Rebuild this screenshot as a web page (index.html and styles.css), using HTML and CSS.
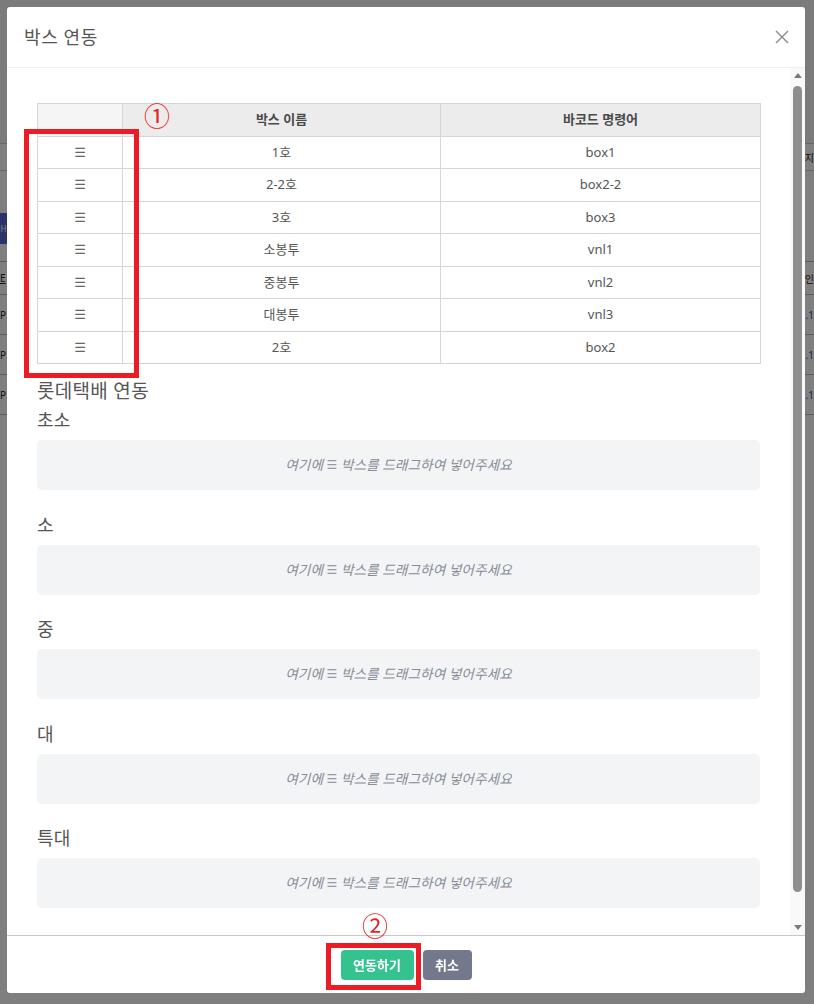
FILE: index.html
```html
<!DOCTYPE html>
<html lang="ko">
<head>
<meta charset="utf-8">
<title>박스 연동</title>
<link rel="stylesheet" href="styles.css">
</head>
<body>
<div class="page">
  <div class="page-top"></div>
  <div class="page-strip"><span class="edge-r">지</span></div>
  <div class="page-tools"><span class="page-btn">H</span></div>
  <div class="page-table">
    <div class="prow phead"><span class="edge-l">E</span><span class="edge-r">인</span></div>
    <div class="prow"><span class="edge-l">P</span><span class="edge-r blue">.1</span></div>
    <div class="prow"><span class="edge-l">P</span><span class="edge-r blue">.1</span></div>
    <div class="prow"><span class="edge-l">P</span><span class="edge-r blue">.1</span></div>
  </div>
</div>
<div class="backdrop"></div>

<div class="modal">
  <div class="modal-header">
    <div class="modal-title">박스 연동</div>
    <button class="close" aria-label="닫기">
      <svg width="14" height="14" viewBox="0 0 14 14"><path d="M1 1 L13 13 M13 1 L1 13" stroke="#888" stroke-width="1.4" fill="none"/></svg>
    </button>
  </div>
  <div class="modal-body">
    <div class="body-content">
      <table class="box-table">
        <colgroup><col class="c1"><col class="c2"><col class="c3"></colgroup>
        <thead>
          <tr><th class="th-empty"></th><th>박스 이름</th><th>바코드 명령어</th></tr>
        </thead>
        <tbody>
          <tr><td><span class="grip">☰</span></td><td>1호</td><td>box1</td></tr>
          <tr><td><span class="grip">☰</span></td><td>2-2호</td><td>box2-2</td></tr>
          <tr><td><span class="grip">☰</span></td><td>3호</td><td>box3</td></tr>
          <tr><td><span class="grip">☰</span></td><td>소봉투</td><td>vnl1</td></tr>
          <tr><td><span class="grip">☰</span></td><td>중봉투</td><td>vnl2</td></tr>
          <tr><td><span class="grip">☰</span></td><td>대봉투</td><td>vnl3</td></tr>
          <tr><td><span class="grip">☰</span></td><td>2호</td><td>box2</td></tr>
        </tbody>
      </table>
      <div class="group-title">롯데택배 연동</div>
      <div class="zones">
        <div class="zone"><div class="zone-label">초소</div><div class="drop">여기에 <span class="grip">☰</span> 박스를 드래그하여 넣어주세요</div></div>
        <div class="zone"><div class="zone-label">소</div><div class="drop">여기에 <span class="grip">☰</span> 박스를 드래그하여 넣어주세요</div></div>
        <div class="zone"><div class="zone-label">중</div><div class="drop">여기에 <span class="grip">☰</span> 박스를 드래그하여 넣어주세요</div></div>
        <div class="zone"><div class="zone-label">대</div><div class="drop">여기에 <span class="grip">☰</span> 박스를 드래그하여 넣어주세요</div></div>
        <div class="zone"><div class="zone-label">특대</div><div class="drop">여기에 <span class="grip">☰</span> 박스를 드래그하여 넣어주세요</div></div>
      </div>
    </div>
    <div class="scrollbar">
      <div class="sb-btn"><svg width="8" height="5" viewBox="0 0 8 5"><path d="M0 5 L8 5 L4 0 Z" fill="#7a7a7a"/></svg></div>
      <div class="sb-track"><div class="sb-thumb"></div></div>
      <div class="sb-btn"><svg width="8" height="5" viewBox="0 0 8 5"><path d="M0 0 L8 0 L4 5 Z" fill="#7a7a7a"/></svg></div>
    </div>
  </div>
  <div class="modal-footer">
    <button class="btn btn-green">연동하기</button>
    <button class="btn btn-gray">취소</button>
  </div>

  <div class="mark-box mark-box-1"></div>
  <div class="mark-num mark-num-1">①</div>
  <div class="mark-box mark-box-2"></div>
  <div class="mark-num mark-num-2">②</div>
</div>
</body>
</html>
```
FILE: styles.css
```css
html, body {
  margin: 0;
  padding: 0;
  height: 100%;
  overflow: hidden;
}
body {
  font-family: "Noto Sans", "Noto Sans CJK KR", sans-serif;
  background: #ffffff;
}

/* background page (dimmed by the backdrop) */
.page {
  width: 814px;
  height: 1004px;
  overflow: hidden;
  background: #ffffff;
  font-size: 11px;
  color: #222;
}
.page-top {
  height: 143px;
  background: #f7f7f7;
}
.page-strip {
  height: 26px;
  border-top: 1px solid #ccc;
  border-bottom: 1px solid #ccc;
  display: flex;
  justify-content: flex-end;
  align-items: center;
}
.edge-r {
  font-size: 10px;
}
.edge-l {
  font-size: 10px;
}
.blue { color: #3050a0; }
.page-tools {
  margin-top: 42px;
  height: 31px;
  display: flex;
}
.page-btn {
  width: 7px;
  background: #5468d4;
  color: #fff;
  font-size: 8px;
  display: flex;
  align-items: center;
  justify-content: center;
}
.page-table {
  margin-top: 17px;
}
.prow {
  height: 39px;
  border-bottom: 1px solid #bbb;
  display: flex;
  justify-content: space-between;
  align-items: center;
}
.phead {
  height: 32px;
  border-top: 1px solid #bbb;
}
.phead .edge-l { text-decoration: underline; }
.backdrop {
  position: fixed;
  inset: 0;
  background: rgba(0, 0, 0, 0.5);
}

/* modal */
.modal {
  position: fixed;
  top: 7px;
  left: 7px;
  width: 798px;
  height: 986px;
  background: #fff;
  border-radius: 3px;
  display: flex;
  flex-direction: column;
}
.modal-header {
  height: 60px;
  flex: none;
  border-bottom: 1px solid #f0f0f0;
  display: flex;
  align-items: center;
  justify-content: space-between;
  padding: 0 16px 0 17px;
}
.modal-title {
  font-size: 18px;
  letter-spacing: 0.6px;
  color: #555;
  line-height: 24px;
}
.close {
  border: 0;
  background: none;
  padding: 0;
  width: 14px;
  height: 14px;
  display: flex;
}
.modal-body {
  flex: 1;
  min-height: 0;
  display: flex;
}
.body-content {
  flex: 1;
  min-width: 0;
  overflow: hidden;
  padding: 35px 30px 0 30px;
}
.scrollbar {
  width: 15px;
  flex: none;
  display: flex;
  flex-direction: column;
  background: #f9f9f9;
}
.sb-btn {
  height: 15px;
  display: flex;
  align-items: center;
  justify-content: center;
}
.sb-track {
  flex: 1;
  padding: 3px 3px;
}
.sb-thumb {
  height: 806px;
  background: #8e8e8e;
  border-radius: 5px;
}

.box-table {
  width: 100%;
  border-collapse: collapse;
  table-layout: fixed;
  font-size: 13px;
}
.c1 { width: 85px; }
.c2 { width: 318px; }
.c3 { width: 320px; }
.box-table th,
.box-table td {
  border: 1px solid #d6d6d6;
  text-align: center;
  padding: 6px 8px;
  line-height: 19.5px;
  height: 19.5px;
}
.box-table th {
  background: #ececec;
  font-weight: 700;
  color: #4a4a4a;
}
.box-table th.th-empty {
  background: #f5f5f5;
}
.box-table td {
  color: #555;
}
.grip {
  display: inline-block;
  vertical-align: top;
  line-height: 19.5px;
  font-family: "DejaVu Sans", sans-serif;
  font-size: 13px;
  font-weight: 400;
  font-style: normal;
  color: #666;
}
.drop .grip {
  line-height: 20px;
  vertical-align: middle;
  color: #979ba4;
  font-size: 12px;
}

.group-title {
  margin-top: 14px;
  font-size: 19px;
  letter-spacing: 0.3px;
  line-height: 26px;
  color: #555;
}
.zones {
  margin-top: 4px;
  display: flex;
  flex-direction: column;
  gap: 22.5px;
}
.zone-label {
  font-size: 18px;
  letter-spacing: 0.3px;
  line-height: 24px;
  color: #555;
  margin-bottom: 8px;
}
.drop {
  height: 50px;
  background: #f3f4f6;
  border-radius: 5px;
  display: flex;
  align-items: center;
  justify-content: center;
  white-space: pre;
  font-style: italic;
  font-size: 13.7px;
  line-height: 20px;
  color: #878c96;
}

.modal-footer {
  height: 57px;
  flex: none;
  border-top: 1px solid #c8c8c8;
  display: flex;
  justify-content: center;
  align-items: center;
  gap: 9px;
}
.btn {
  height: 30px;
  border: 0;
  border-radius: 4px;
  color: #fff;
  font-family: "Noto Sans", "Noto Sans CJK KR", sans-serif;
  font-size: 13px;
  font-weight: 600;
  padding: 0 10px;
}
.btn-green {
  width: 73px;
  background: #34c38f;
}
.btn-gray {
  width: 49px;
  background: #74788d;
}

/* annotations (overlay) */
.mark-box {
  position: absolute;
  border: 5px solid #ec1c24;
  box-sizing: border-box;
}
.mark-box-1 {
  left: 17px;
  top: 122px;
  width: 115px;
  height: 249px;
}
.mark-box-2 {
  left: 319px;
  top: 936px;
  width: 95px;
  height: 47px;
}
.mark-num {
  position: absolute;
  color: #ec1c24;
  font-family: "Noto Sans CJK KR", sans-serif;
  font-size: 26px;
  line-height: 28px;
}
.mark-num-1 {
  left: 137px;
  top: 94px;
}
.mark-num-2 {
  left: 355px;
  top: 904px;
}
```
